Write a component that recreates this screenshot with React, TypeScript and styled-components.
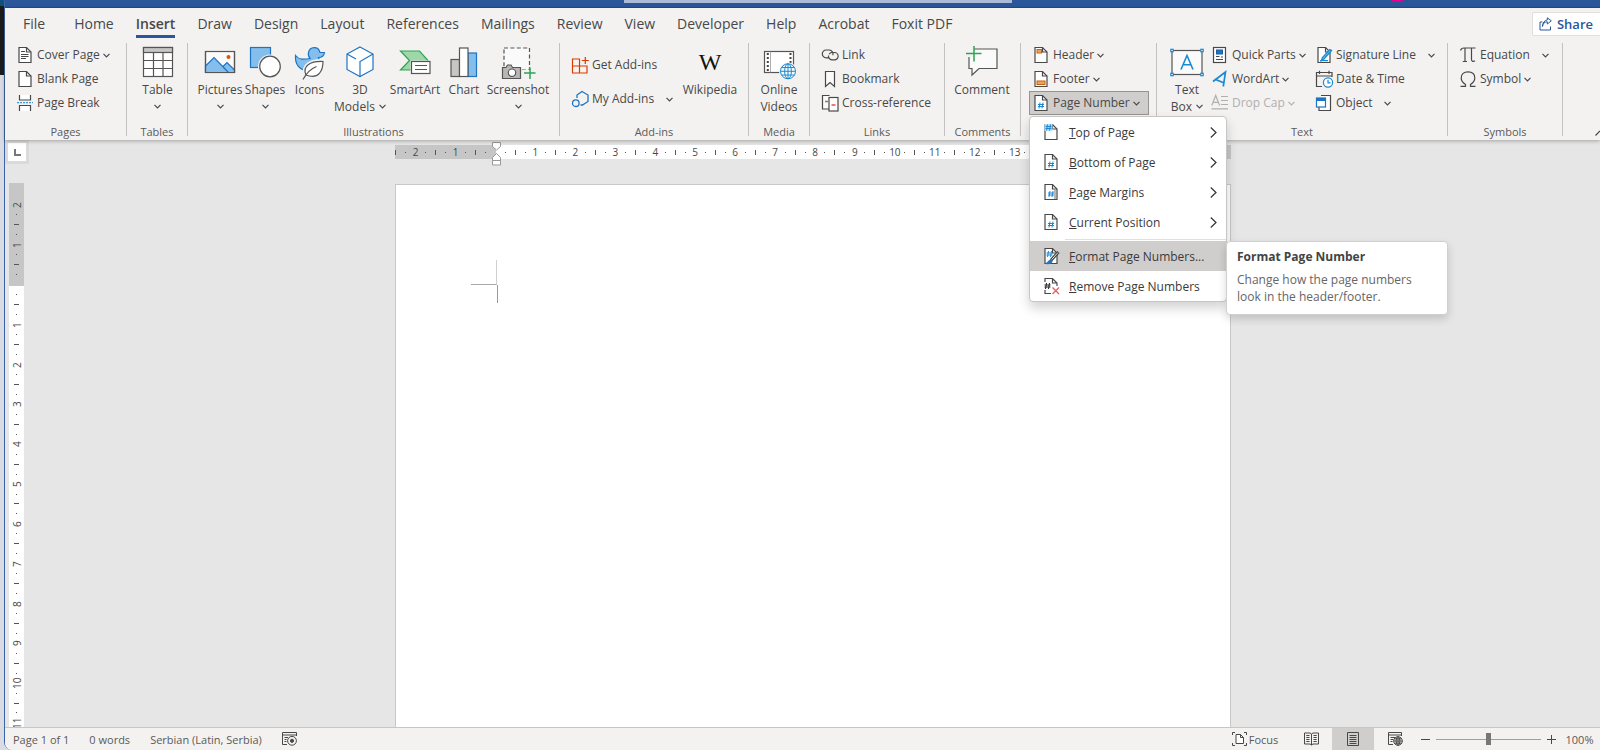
import React from "react";
import styled, { createGlobalStyle, css } from "styled-components";

const ink = "#484848";
const blue = "#1e74c4";
const sky = "#83beec";

const GlobalStyle = createGlobalStyle`
  * { box-sizing: border-box; }
  body { margin: 0; overflow: hidden; }
  body, button, input { font-family: "Open Sans", "Noto Sans", sans-serif; color: ${ink}; }
  button { border: 0; padding: 0; background: none; text-align: left; }
  svg { display: block; flex: none; overflow: visible; }
`;

/* ---------- frame ---------- */

const Desktop = styled.div`
  display: flex;
  height: 100vh;
  background: linear-gradient(#10507c 0 6px, #1b1b1b 6px 75px, #d9dce2 75px);
`;

const AppWindow = styled.div`
  display: flex;
  flex-direction: column;
  flex: 1;
  min-width: 0;
  margin-left: 4px;
  border-left: 1px solid #3c63a9;
  border-bottom-left-radius: 8px;
  background: #e6e6e6;
`;

const TitleBar = styled.header`
  display: flex;
  justify-content: center;
  height: 8px;
  flex: none;
  background: #2b579a;
  border-bottom: 1px solid #1c4d93;
`;

const SearchInput = styled.input`
  width: 388px;
  height: 3px;
  margin: 0 auto 0 619px;
  padding: 0;
  border: 0;
  background: #a9bbd6;
`;

const Avatar = styled.span`
  width: 12px;
  height: 2px;
  margin-right: 197px;
  border-radius: 0 0 6px 6px;
  background: #e3008c;
`;

const Ribbon = styled.div`
  position: relative;
  z-index: 2;
  flex: none;
  background: #f3f2f1;
  padding-bottom: 4px;
  box-shadow: 0 1px 4px rgba(0, 0, 0, 0.3);
`;

const TabRow = styled.nav`
  display: flex;
  align-items: flex-start;
  justify-content: space-between;
  height: 35px;
`;

const TabList = styled.div`
  display: flex;
  gap: 22px;
  padding: 7px 0 0 18px;
`;

const Tab = styled.button<{ $active?: boolean; $first?: boolean }>`
  font-size: 14px;
  line-height: 18px;
  padding-bottom: 2px;
  margin-right: ${(p) => (p.$first ? "7px" : "0")};
  border-bottom: 3px solid ${(p) => (p.$active ? "#2b579a" : "transparent")};
  font-weight: ${(p) => (p.$active ? 600 : 400)};
`;

const ShareButton = styled.button`
  display: flex;
  align-items: center;
  gap: 5px;
  height: 24px;
  margin-top: 4px;
  padding: 0 7px 0 6px;
  background: #ffffff;
  border: 1px solid #e1dfdd;
  border-right: 0;
  border-radius: 2px 0 0 2px;
  font-size: 13px;
  font-weight: 600;
  color: #2b579a;
`;

/* ---------- ribbon groups ---------- */

const GroupRow = styled.div`
  display: flex;
`;

const GroupBox = styled.section<{ $width: number }>`
  display: flex;
  flex-direction: column;
  justify-content: space-between;
  flex: 0 0 ${(p) => p.$width}px;
  height: 93px;
  border-right: 1px solid #c4c2c0;
`;

const GroupBody = styled.div<{ $pad: number }>`
  display: flex;
  padding-left: ${(p) => p.$pad}px;
`;

const GroupLabel = styled.h2`
  margin: 0 0 -2px;
  font-size: 11px;
  font-weight: 400;
  line-height: 12px;
  text-align: center;
  color: #5a5a5a;
`;

const Stack = styled.div<{ $width?: number; $spread?: boolean }>`
  display: flex;
  flex-direction: column;
  width: ${(p) => (p.$width ? p.$width + "px" : "auto")};
  ${(p) =>
    p.$spread &&
    css`
      gap: 10px;
      padding-top: 10px;
    `}
`;

const SmallButton = styled.button<{ $split?: boolean; $pressed?: boolean }>`
  display: flex;
  align-items: center;
  height: 24px;
  padding-right: 8px;
  font-size: 12px;
  line-height: 16px;
  white-space: nowrap;
  ${(p) =>
    p.$pressed &&
    css`
      padding-left: 2px;
      margin-left: -3px;
      background: #d0cecd;
      border: 1px solid #969492;
    `}
  &:disabled { color: #b1afad; }
  > svg { margin-right: 3px; }
  > span + svg { margin: 0 0 0 ${(p) => (p.$split ? "12px" : "3px")}; }
`;

const LargeButton = styled.button<{ $width: number }>`
  display: flex;
  flex-direction: column;
  align-items: center;
  width: ${(p) => p.$width}px;
  padding-top: 3px;
  font-size: 12px;
  line-height: 17px;
  white-space: nowrap;
  > svg { margin-bottom: 3px; }
  > svg + span + svg { margin: 6px 0 0; }
`;

const SecondLine = styled.span`
  display: flex;
  align-items: center;
  gap: 4px;
`;

const WikiGlyph = styled.span`
  height: 32px;
  margin-bottom: 3px;
  font-family: "Liberation Serif", serif;
  font-size: 24px;
  line-height: 32px;
  color: #111111;
`;

const CollapseButton = styled.button`
  align-self: flex-end;
  margin-left: auto;
`;

/* ---------- menu ---------- */

const MenuAnchor = styled.div`
  position: relative;
`;

const Menu = styled.div`
  position: absolute;
  z-index: 5;
  top: 25px;
  left: -3px;
  width: 198px;
  background: #ffffff;
  border: 1px solid #c8c6c4;
  border-radius: 4px;
  box-shadow: 0 6px 12px rgba(0, 0, 0, 0.18);
`;

const MenuItem = styled.button<{ $active?: boolean }>`
  display: flex;
  align-items: center;
  gap: 9px;
  width: 100%;
  height: 30px;
  padding: 0 9px 0 12px;
  font-size: 12px;
  white-space: nowrap;
  color: #3a3a3a;
  background: ${(p) => (p.$active ? "#d0cecd" : "transparent")};
  > span { flex: 1; }
`;

const MenuRule = styled.hr`
  height: 1px;
  margin: 2px 0 1px 35px;
  border: 0;
  background: #e1dfdd;
`;

const Tooltip = styled.div`
  position: absolute;
  top: 124px;
  left: 196px;
  width: 222px;
  padding: 6px 10px 9px;
  background: #ffffff;
  border: 1px solid #d2d0ce;
  border-radius: 4px;
  box-shadow: 0 4px 8px rgba(0, 0, 0, 0.16);
  font-size: 12px;
  line-height: 17px;
  color: #666666;
  h3 {
    margin: 0 0 6px;
    font-size: 12px;
    font-weight: 700;
    color: #444444;
  }
  p { margin: 0; }
`;

/* ---------- document area ---------- */

const Workspace = styled.main`
  display: flex;
  flex: 1;
  min-height: 0;
  overflow: hidden;
`;

const Gutter = styled.div`
  display: flex;
  flex-direction: column;
  width: 24px;
  flex: none;
`;

const TabStop = styled.button`
  display: flex;
  align-items: center;
  justify-content: center;
  flex: none;
  width: 24px;
  height: 24px;
  margin-bottom: 19px;
  background: #ffffff;
  border: 3px solid #dadada;
`;

const VRuler = styled.div`
  margin-left: 4px;
  width: 15px;
  flex: none;
  display: flex;
  flex-direction: column;
`;

const VMargin = styled.div`
  height: 103px;
  flex: none;
  display: grid;
  grid-template-rows: repeat(8, 1fr);
  padding: 17px 0 7px;
  background: #c6c6c6;
`;

const VScale = styled.div`
  display: grid;
  grid-template-rows: repeat(84, 1fr);
  height: 840px;
  padding-top: 4px;
  background: #ffffff;
`;

const HRuler = styled.div`
  display: flex;
  width: 836px;
  height: 14px;
  margin-top: 5px;
`;

const HMargin = styled.div`
  position: relative;
  display: grid;
  grid-template-columns: repeat(10, 10px);
  justify-content: end;
  flex: 0 0 101px;
  width: 101px;
  min-width: 0;
  padding-right: 5px;
  background: #c6c6c6;
`;

const HScale = styled.div`
  display: grid;
  grid-template-columns: repeat(63, 1fr);
  flex: 1;
  padding-left: 5px;
  background: #ffffff;
`;

const Mark = styled.span<{ $vertical?: boolean }>`
  display: flex;
  align-items: center;
  justify-content: center;
  min-width: 0;
  min-height: 0;
  font-size: 10px;
  line-height: 14px;
  white-space: nowrap;
  ${(p) =>
    p.$vertical &&
    css`
      writing-mode: vertical-rl;
      transform: rotate(180deg);
    `}
`;

const Tick = styled.i<{ $half?: boolean; $vertical?: boolean }>`
  width: ${(p) => (p.$half && p.$vertical ? "5px" : "1px")};
  height: ${(p) => (p.$half && !p.$vertical ? "5px" : "1px")};
  background: #555555;
`;

const IndentHandle = styled.span`
  position: absolute;
  right: -5px;
  top: -3px;
`;

const Canvas = styled.div`
  display: flex;
  flex-direction: column;
  align-items: center;
  flex: 1;
  padding-right: 4px;
`;

const Paper = styled.article`
  flex: 1;
  width: 836px;
  margin-top: 25px;
  padding: 75px 0 0 75px;
  background: #ffffff;
  border: 1px solid #c8c8c8;
  border-bottom: 0;
`;

const CropMark = styled.div`
  width: 26px;
  height: 25px;
  border-right: 1px solid #d0d0d0;
  border-bottom: 1px solid #a8a8a8;
`;

const Caret = styled.div`
  width: 1px;
  height: 18px;
  margin-left: 26px;
  background: #999999;
`;

/* ---------- status bar ---------- */

const StatusBar = styled.footer`
  display: flex;
  align-items: stretch;
  justify-content: space-between;
  flex: none;
  height: 23px;
  padding-left: 8px;
  border-top: 1px solid #c8c6c4;
  border-bottom-left-radius: 7px;
  background: #f3f2f1;
`;

const StatusSide = styled.div<{ $gap?: number }>`
  display: flex;
  align-items: stretch;
  gap: ${(p) => p.$gap ?? 0}px;
`;

const StatusButton = styled.button<{ $width?: number; $active?: boolean }>`
  display: flex;
  align-items: center;
  justify-content: center;
  gap: 2px;
  width: ${(p) => (p.$width ? p.$width + "px" : "auto")};
  font-size: 11px;
  color: #5a5a5a;
  background: ${(p) => (p.$active ? "#d0cecd" : "transparent")};
`;

const Zoom = styled.input`
  appearance: none;
  width: 105px;
  margin: 0 2px;
  background: transparent;
  &::-webkit-slider-runnable-track {
    height: 12px;
    background: linear-gradient(#a19f9d, #a19f9d) center / 100% 1px no-repeat;
  }
  &::-webkit-slider-thumb {
    appearance: none;
    width: 5px;
    height: 12px;
    background: #777777;
  }
`;

/* ---------- icons ---------- */

const Chevron = ({ color = ink }: { color?: string }) => (
  <svg width="7" height="5" viewBox="0 0 7 5" fill="none" stroke={color} strokeWidth="1.2">
    <path d="M.5.8 3.5 3.8 6.5.8" />
  </svg>
);

const ChevronRight = () => (
  <svg width="7" height="11" viewBox="0 0 7 11" fill="none" stroke="#333" strokeWidth="1.2">
    <path d="M.8.5 6 5.5.8 10.5" />
  </svg>
);

const Small = ({ children }: { children: React.ReactNode }) => (
  <svg width="18" height="18" viewBox="0 0 18 18" fill="none" stroke={ink} strokeWidth="1.2">
    {children}
  </svg>
);

const Large = ({ children }: { children: React.ReactNode }) => (
  <svg width="32" height="32" viewBox="0 0 32 32" fill="none" stroke="#555" strokeWidth="1.2">
    {children}
  </svg>
);

const PageShape = () => (
  <>
    <path d="M3 1.5H10.5L15 6V16.5H3Z" fill="#fff" />
    <path d="M10.5 1.5V6H15" />
  </>
);

const Hash = ({ x, y, color = "#1c8ad0" }: { x: number; y: number; color?: string }) => (
  <path
    d={`M${x + 2} ${y}L${x + 1} ${y + 6}M${x + 5} ${y}L${x + 4} ${y + 6}M${x} ${y + 2}H${x + 6}M${x} ${y + 4}H${x + 6}`}
    stroke={color}
    strokeWidth="1"
  />
);

const Globe = ({ x, y, r, color }: { x: number; y: number; r: number; color: string }) => (
  <g stroke={color} strokeWidth="1">
    <circle cx={x} cy={y} r={r} fill="#f8fbfe" />
    <ellipse cx={x} cy={y} rx={r * 0.45} ry={r} />
    <path d={`M${x - r} ${y}H${x + r}M${x} ${y - r}V${y + r}M${x - r * 0.87} ${y - r / 2}H${x + r * 0.87}M${x - r * 0.87} ${y + r / 2}H${x + r * 0.87}`} />
  </g>
);

const CoverPageIcon = () => (
  <Small><PageShape /><path d="M5 5.5H9M5 8.5H12.5M5 10.5H12.5M5 12.5H10" strokeWidth="1" /></Small>
);
const BlankPageIcon = () => <Small><PageShape /></Small>;
const PageBreakIcon = () => (
  <Small>
    <path d="M3.5 1V6H14.5V1M3.5 17V11.5H14.5V17" fill="#fff" />
    <path d="M1 8.7H17" stroke="#3a96dd" strokeDasharray="2 1" />
  </Small>
);
const TableIcon = () => (
  <Large>
    <rect x="1.5" y="1.5" width="29" height="29" fill="#fff" />
    <rect x="1.5" y="1.5" width="29" height="5" fill="#c8c6c4" />
    <path d="M1.5 14.5H30.5M1.5 22.5H30.5M11.5 6.5V30.5M21 6.5V30.5" />
  </Large>
);
const PicturesIcon = () => (
  <Large>
    <rect x="1.5" y="5.5" width="29" height="21" fill="#fafafa" />
    <path d="M18.5 21 23 16.5 30.5 24V26.5H23Z" fill={sky} stroke={blue} />
    <path d="M1.5 26.5V20L10 11.5 24.5 26.5Z" fill={sky} stroke={blue} />
    <path d="M1.5 26.5V5.5H30.5V26.5Z" />
    <circle cx="24.5" cy="11" r="2" fill="#e35205" stroke="none" />
  </Large>
);
const ShapesIcon = () => (
  <Large>
    <rect x="1.5" y="1.5" width="20" height="20" fill={sky} stroke={blue} />
    <circle cx="21" cy="20.5" r="12" fill="#f3f2f1" stroke="none" />
    <circle cx="21" cy="20.5" r="10.3" fill="#fff" />
  </Large>
);
const IconsIcon = () => (
  <Large>
    <path d="M1.5 9.5C5 14 10 13.5 16 12.5 13 9 14 2 20 1.7 24 1.5 25.5 4.5 26 6.5H30.5C30 10 28 11.5 24.5 11.5 28 19 22 24.5 14 24.5 5 24.5 1 18 1.5 9.5Z" fill={sky} stroke={blue} />
    <path d="M12 29C8 20 16 14 30 15 30 24 26 34 12 29Z" fill="#fff" stroke="#f3f2f1" strokeWidth="4" />
    <path d="M12 29C8 20 16 15 29 15.5 29 24 25 34 12 29Z" fill="#fff" />
    <path d="M9 33.5C12 28 16 23 22.5 20.5" />
  </Large>
);
const CubeIcon = () => (
  <Large>
    <g stroke={blue}>
      <path d="M16 1 29 8V23.5L16 30.5 3 23.5V8Z" fill="#fff" />
      <path d="M3 8 12 13M29 8 16 15.5V30.5" />
    </g>
  </Large>
);
const SmartArtIcon = () => (
  <Large>
    <path d="M1.5 5H20.5L29 14.5 20.5 24H1.5L10.5 14.5Z" fill="#9fd8a8" stroke="#2ea352" />
    <rect x="11.5" y="14.5" width="20.5" height="14" fill="#f3f2f1" stroke="none" />
    <rect x="12.5" y="15.5" width="18.5" height="12" fill="#fff" />
    <path d="M16 19.5H28M16 23.5H28" strokeWidth="1" />
  </Large>
);
const ChartIcon = () => (
  <Large>
    <rect x="3" y="13.5" width="8.5" height="17" fill="#c8c6c4" />
    <rect x="20" y="7" width="8.5" height="23.5" fill={sky} stroke={blue} />
    <rect x="11.5" y="2" width="8.5" height="28.5" fill="#fff" />
  </Large>
);
const ScreenshotIcon = () => (
  <Large>
    <rect x="2" y="2" width="25.5" height="22" fill="#fafafa" strokeDasharray="4 2.4" />
    <path d="M19 24H34V34H19Z" fill="#f3f2f1" stroke="none" />
    <path d="M.5 21.5H4L5.5 19H9L10.5 21.5H18.5V32.5H.5Z" fill="#b9b7b5" />
    <circle cx="10" cy="26.7" r="3.7" fill="#fff" />
    <path d="M28 21.5V33M22 27H33.5" stroke="#2ea352" strokeWidth="1.5" />
  </Large>
);
const GetAddinsIcon = () => (
  <Small>
    <path d="M1.5 3H8.5V17H1.5ZM1.5 10H16V17H8.5" stroke="#d83b01" fill="#fbf3f0" />
    <path d="M14.3 1V8M10.8 4.5H17.8" stroke="#d83b01" />
  </Small>
);
const MyAddinsIcon = () => (
  <Small>
    <g stroke={blue} strokeWidth="1.3">
      <path d="M6 8V5L11 1.5 17 5V11.5L11.5 15H9.5" />
      <circle cx="4.8" cy="13.2" r="3.3" />
    </g>
  </Small>
);
const OnlineVideosIcon = () => (
  <Large>
    <rect x="1.5" y="5.5" width="29" height="21" fill="#fff" />
    <path d="M4.8 7V26M27.5 7V17" stroke="#444" strokeWidth="2" strokeDasharray="2 2" />
    <path d="M7.5 5.5V26.5" stroke="#999" strokeWidth=".8" />
    <circle cx="25" cy="25.3" r="9" fill="#f3f2f1" stroke="none" />
    <Globe x={25} y={25.3} r={7.5} color="#1c8ad0" />
  </Large>
);
const LinkIcon = () => (
  <Small>
    <path d="M8.5 11.8H5.2A3.9 3.9 0 0 1 5.2 4H8.3A3.9 3.9 0 0 1 11.8 9.2M8.2 8.2A3.5 3.5 0 0 1 10.8 6.5H13.5A3.6 3.6 0 0 1 13.5 13.8H10.8A3.6 3.6 0 0 1 7.5 9.5" />
  </Small>
);
const BookmarkIcon = () => <Small><path d="M4.5 1.5H13.5V16.5L9 12.5 4.5 16.5Z" fill="#fafafa" /></Small>;
const CrossRefIcon = () => (
  <Small>
    <path d="M8 15H1.5V1.5H8.5" fill="#fafafa" />
    <rect x="8" y="3.5" width="9" height="13.5" fill="#fff" />
    <path d="M4 7.5H7M10.5 11H14.5" stroke="#e8504a" strokeWidth="1.5" />
  </Small>
);
const CommentIcon = () => (
  <Large>
    <path d="M3 3H31V22.5H13L6 29V22.5H3Z" fill="#fafafa" />
    <path d="M-1 -1H8V11H-1Z" fill="#f3f2f1" stroke="none" />
    <path d="M8 0V15.5M0 7.5H15.5" stroke="#2ea352" strokeWidth="1.5" />
  </Large>
);
const HeaderIcon = () => (
  <Small><PageShape /><rect x="5" y="3.5" width="4.5" height="3.5" fill="#f0a35e" stroke="#c8620f" strokeWidth="1" /></Small>
);
const FooterIcon = () => (
  <Small><PageShape /><rect x="5" y="11" width="8" height="3.5" fill="#f0a35e" stroke="#c8620f" strokeWidth="1" /></Small>
);
const PageNumberIcon = () => <Small><PageShape /><Hash x={6} y={8.5} /></Small>;
const TopPageIcon = () => (
  <Small><PageShape /><rect x="2.5" y="1" width="8" height="7" fill="#b5d8f3" stroke="none" /><Hash x={3.5} y={1.5} /></Small>
);
const MarginsIcon = () => <Small><PageShape /><path d="M13 7V16" stroke="#888" /><Hash x={6} y={8} /></Small>;
const FormatIcon = () => (
  <Small>
    <PageShape />
    <Hash x={4.5} y={4} />
    <path d="M16.5 5 9 13.2" stroke="#444" strokeWidth="3" />
    <path d="M16 5.5 9.5 12.7" stroke="#ddd" strokeWidth="1" />
    <path d="M4 16.5C7 16 6 13.5 9 12.8L10 14C9.5 16.5 7 17 4 16.5Z" fill={blue} stroke={blue} />
  </Small>
);
const RemoveIcon = () => (
  <Small>
    <path d="M3 5V1.5H10.5L15 6V9M10.5 1.5V6H15M3 13V16.5H9" />
    <Hash x={2.5} y={6} color="#222" />
    <path d="M10.5 10.5 17 17M17 10.5 10.5 17" stroke="#e06060" strokeWidth="1.3" />
  </Small>
);
const TextBoxIcon = () => (
  <Large>
    <rect x="1" y="4.5" width="30" height="24" fill="#fafafa" />
    <g fill="#fff" stroke="#1c8ad0">
      <rect x="-.2" y="3.3" width="2.4" height="2.4" />
      <rect x="29.8" y="3.3" width="2.4" height="2.4" />
      <rect x="-.2" y="27.3" width="2.4" height="2.4" />
      <rect x="29.8" y="27.3" width="2.4" height="2.4" />
    </g>
    <path d="M10 23.5 16 9.5 22 23.5M12 18.8H20" stroke="#1c8ad0" strokeWidth="1.6" />
  </Large>
);
const QuickPartsIcon = () => (
  <Small>
    <rect x="2.5" y="1.5" width="12" height="15" fill="#fff" />
    <rect x="5.5" y="4" width="6" height="4" fill={blue} stroke="#175ea3" strokeWidth="1" />
    <path d="M5 10.5H8.5M5 13.5H12M10 11H12" strokeWidth="1" />
  </Small>
);
const WordArtIcon = () => (
  <Small><path d="M2 11.5 14.5 2 12.3 16.5M2 11.5 4.5 9.5 12.6 12.8" stroke="#1c8ad0" strokeWidth="1.7" /></Small>
);
const DropCapIcon = () => (
  <Small>
    <path d="M.8 11.5 4.7 1.5 8.6 11.5M2.2 8.3H7.2M10 2.5H17M10 6.5H17M10 10.5H17M.5 14.8H17" stroke="#b1afad" />
  </Small>
);
const SignatureIcon = () => (
  <Small>
    <PageShape />
    <path d="M16.5 4.5 9 13 6.5 14.5 7.3 11.8 14.8 3.5Z" fill={sky} stroke="#1c8ad0" strokeWidth="1.3" />
    <path d="M5 14.6H13" stroke="#1c8ad0" />
  </Small>
);
const DateIcon = () => (
  <Small>
    <path d="M7 16.5H1.5V2.5H17V7M1.5 6H17M4.5.8V4M14 .8V4" />
    <circle cx="13" cy="12.5" r="4.6" fill="#fff" stroke="#1c8ad0" />
    <path d="M13 9.8V12.8H15.5" stroke="#1c8ad0" />
  </Small>
);
const ObjectIcon = () => (
  <Small>
    <path d="M6 1.5H15.5V16.5H4V13" fill="#fff" />
    <rect x="1.5" y="4" width="9" height="9" fill="#fff" stroke={blue} />
    <path d="M1.5 5.5H10.5" stroke={blue} strokeWidth="3" />
  </Small>
);
const PiIcon = () => (
  <Small>
    <path d="M1.5 4.5C2 2.5 3 2 5 2H16.5M6 2V15.5M3.8 15.5H8M12.5 2V13.5C12.5 15.5 14.5 16 16 14.8" />
  </Small>
);
const OmegaIcon = () => (
  <Small>
    <path d="M1.5 16.3H6.5V14.5C3.5 12.5 2.2 10.5 2.2 8 2.2 4 5 1.8 9 1.8S15.8 4 15.8 8C15.8 10.5 14.5 12.5 11.5 14.5V16.3H16.5" />
  </Small>
);
const ShareIcon = () => (
  <svg width="13" height="14" viewBox="0 0 13 14" fill="none" stroke="#2b579a" strokeWidth="1">
    <path d="M3.5 5H1V13H11.5V9.5" />
    <path d="M3.5 9.5C3.8 6.5 5.5 4.8 8.3 4.8V7L12.3 3.8 8.3.8V3C5.5 3.2 3.5 6 3.5 9.5Z" />
  </svg>
);
const RecordIcon = () => (
  <svg width="16" height="14" viewBox="0 0 16 14" fill="none" stroke={ink}>
    <path d="M5 12.5H.5V.5H14.5V4M.5 3H14.5M2.5 5.5H6M2.5 7.5H4.5M2.5 9.5H4.5" />
    <circle cx="10" cy="8.8" r="4.4" />
    <circle cx="10" cy="8.8" r="1.6" fill={ink} />
  </svg>
);
const FocusIcon = () => (
  <svg width="15" height="14" viewBox="0 0 15 14" fill="none" stroke={ink}>
    <path d="M3 .5H.5V3M.5 11V13.5H3M12 .5H14.5V3M14.5 11V13.5H12" />
    <path d="M4 2.5H8.5L11.5 5.5V11.5H4ZM8.5 2.5V5.5H11.5" fill="#fff" />
  </svg>
);
const ReadIcon = () => (
  <svg width="15" height="14" viewBox="0 0 15 14" fill="none" stroke={ink}>
    <path d="M.5 1H6L7.5 2 9 1H14.5V12H9L7.5 13 6 12H.5ZM7.5 2V13M2.3 3.5H5.5M2.3 5.5H5.5M2.3 7.5H5.5M2.3 9.5H5.5M9.5 3.5H12.7M9.5 5.5H12.7M9.5 7.5H12.7M9.5 9.5H12.7" />
  </svg>
);
const PrintIcon = () => (
  <svg width="12" height="14" viewBox="0 0 12 14" fill="none" stroke={ink}>
    <path d="M.5.5H11.5V13.5H.5ZM2.5 3.5H9.5M2.5 5.5H9.5M2.5 7.5H9.5M2.5 9.5H9.5M2.5 11.5H9.5" />
  </svg>
);
const WebIcon = () => (
  <svg width="15" height="14" viewBox="0 0 15 14" fill="none" stroke={ink}>
    <path d="M5 12.5H.5V.5H13.5V4M.5 3H13.5M2.5 5.5H7M2.5 7.5H5.5M2.5 9.5H4.5" />
    <Globe x={10} y={9} r={4.3} color={ink} />
  </svg>
);

/* ---------- pieces ---------- */

interface CommandProps {
  icon: React.ReactNode;
  label: string;
  menu?: boolean;
  split?: boolean;
  pressed?: boolean;
  disabled?: boolean;
}

const Command = ({ icon, label, menu, split, pressed, disabled }: CommandProps) => (
  <SmallButton $split={split} $pressed={pressed} disabled={disabled}>
    {icon}
    <span>{label}</span>
    {(menu || split) && <Chevron color={disabled ? "#b1afad" : ink} />}
  </SmallButton>
);

interface BigCommandProps {
  icon: React.ReactNode;
  width: number;
  label: string;
  second?: string;
  menu?: boolean;
}

const BigCommand = ({ icon, width, label, second, menu }: BigCommandProps) => (
  <LargeButton $width={width}>
    {icon}
    <span>{label}</span>
    {second && (
      <SecondLine>
        {second}
        {menu && <Chevron />}
      </SecondLine>
    )}
    {!second && menu && <Chevron />}
  </LargeButton>
);

interface GroupProps {
  label: string;
  width: number;
  pad?: number;
  hideLabel?: boolean;
  children: React.ReactNode;
}

const Group = ({ label, width, pad = 0, hideLabel, children }: GroupProps) => (
  <GroupBox $width={width} aria-label={label}>
    <GroupBody $pad={pad}>{children}</GroupBody>
    {!hideLabel && <GroupLabel>{label}</GroupLabel>}
  </GroupBox>
);

const quarterMark = (quarter: number, vertical?: boolean) => {
  const q = Math.abs(quarter);
  return (
    <Mark key={quarter} $vertical={vertical && q % 4 === 0}>
      {q % 4 === 0 ? q / 4 : <Tick $half={q % 2 === 0} $vertical={vertical} />}
    </Mark>
  );
};

const range = (from: number, to: number) => Array.from({ length: to - from + 1 }, (_, i) => from + i);

const tabs = ["File", "Home", "Insert", "Draw", "Design", "Layout", "References", "Mailings", "Review", "View", "Developer", "Help", "Acrobat", "Foxit PDF"];

const menuItems = [
  { label: "Top of Page", icon: <TopPageIcon />, sub: true },
  { label: "Bottom of Page", icon: <PageNumberIcon />, sub: true },
  { label: "Page Margins", icon: <MarginsIcon />, sub: true },
  { label: "Current Position", icon: <PageNumberIcon />, sub: true },
  { label: "Format Page Numbers...", icon: <FormatIcon />, active: true },
  { label: "Remove Page Numbers", icon: <RemoveIcon /> },
];

const PageNumberMenu = () => (
  <Menu role="menu">
    {menuItems.map((item) => (
      <React.Fragment key={item.label}>
        {item.active && <MenuRule />}
        <MenuItem role="menuitem" $active={item.active}>
          {item.icon}
          <span>
            <u>{item.label[0]}</u>
            {item.label.slice(1)}
          </span>
          {item.sub && <ChevronRight />}
        </MenuItem>
      </React.Fragment>
    ))}
    <Tooltip role="tooltip">
      <h3>Format Page Number</h3>
      <p>
        Change how the page numbers
        <br />
        look in the header/footer.
      </p>
    </Tooltip>
  </Menu>
);

export default function App() {
  return (
    <Desktop>
      <GlobalStyle />
      <AppWindow>
        <TitleBar>
          <SearchInput aria-label="Search" />
          <Avatar />
        </TitleBar>

        <Ribbon>
          <TabRow>
            <TabList role="tablist">
              {tabs.map((tab) => (
                <Tab key={tab} role="tab" $active={tab === "Insert"} $first={tab === "File"}>
                  {tab}
                </Tab>
              ))}
            </TabList>
            <ShareButton>
              <ShareIcon />
              Share
            </ShareButton>
          </TabRow>

          <GroupRow>
            <Group label="Pages" width={122} pad={11}>
              <Stack>
                <Command icon={<CoverPageIcon />} label="Cover Page" menu />
                <Command icon={<BlankPageIcon />} label="Blank Page" />
                <Command icon={<PageBreakIcon />} label="Page Break" />
              </Stack>
            </Group>
            <Group label="Tables" width={61} pad={8}>
              <BigCommand icon={<TableIcon />} width={45} label="Table" menu />
            </Group>
            <Group label="Illustrations" width={372} pad={9}>
              <BigCommand icon={<PicturesIcon />} width={46} label="Pictures" menu />
              <BigCommand icon={<ShapesIcon />} width={44} label="Shapes" menu />
              <BigCommand icon={<IconsIcon />} width={45} label="Icons" />
              <BigCommand icon={<CubeIcon />} width={56} label="3D" second="Models" menu />
              <BigCommand icon={<SmartArtIcon />} width={54} label="SmartArt" />
              <BigCommand icon={<ChartIcon />} width={44} label="Chart" />
              <BigCommand icon={<ScreenshotIcon />} width={64} label="Screenshot" menu />
            </Group>
            <Group label="Add-ins" width={189} pad={11}>
              <Stack $width={108} $spread>
                <Command icon={<GetAddinsIcon />} label="Get Add-ins" />
                <Command icon={<MyAddinsIcon />} label="My Add-ins" split />
              </Stack>
              <LargeButton $width={62}>
                <WikiGlyph aria-hidden>W</WikiGlyph>
                <span>Wikipedia</span>
              </LargeButton>
            </Group>
            <Group label="Media" width={61} pad={7}>
              <BigCommand icon={<OnlineVideosIcon />} width={46} label="Online" second="Videos" />
            </Group>
            <Group label="Links" width={135} pad={11}>
              <Stack>
                <Command icon={<LinkIcon />} label="Link" />
                <Command icon={<BookmarkIcon />} label="Bookmark" />
                <Command icon={<CrossRefIcon />} label="Cross-reference" />
              </Stack>
            </Group>
            <Group label="Comments" width={76} pad={7}>
              <BigCommand icon={<CommentIcon />} width={60} label="Comment" />
            </Group>
            <Group label="Header and footer" width={136} pad={11} hideLabel>
              <Stack>
                <Command icon={<HeaderIcon />} label="Header" menu />
                <Command icon={<FooterIcon />} label="Footer" menu />
                <MenuAnchor>
                  <Command icon={<PageNumberIcon />} label="Page Number" menu pressed />
                  <PageNumberMenu />
                </MenuAnchor>
              </Stack>
            </Group>
            <Group label="Text" width={291} pad={6}>
              <BigCommand icon={<TextBoxIcon />} width={48} label="Text" second="Box" menu />
              <Stack $width={104}>
                <Command icon={<QuickPartsIcon />} label="Quick Parts" menu />
                <Command icon={<WordArtIcon />} label="WordArt" menu />
                <Command icon={<DropCapIcon />} label="Drop Cap" menu disabled />
              </Stack>
              <Stack>
                <Command icon={<SignatureIcon />} label="Signature Line" split />
                <Command icon={<DateIcon />} label="Date & Time" />
                <Command icon={<ObjectIcon />} label="Object" split />
              </Stack>
            </Group>
            <Group label="Symbols" width={115} pad={11}>
              <Stack>
                <Command icon={<PiIcon />} label="Equation" split />
                <Command icon={<OmegaIcon />} label="Symbol" menu />
              </Stack>
            </Group>
            <CollapseButton aria-label="Collapse the Ribbon">
              <svg width="5" height="6" viewBox="0 0 5 6" fill="none" stroke={ink} strokeWidth="1.2">
                <path d="M.5 5.5 5 1" />
              </svg>
            </CollapseButton>
          </GroupRow>
        </Ribbon>

        <Workspace>
          <Gutter>
            <TabStop aria-label="Left tab">
              <svg width="7" height="7" viewBox="0 0 7 7" fill="none" stroke="#777" strokeWidth="2">
                <path d="M1 0V6H7" />
              </svg>
            </TabStop>
            <VRuler>
              <VMargin>{range(-8, -1).map((q) => quarterMark(q, true))}</VMargin>
              <VScale>{range(1, 44).map((q) => quarterMark(q, true))}</VScale>
            </VRuler>
          </Gutter>
          <Canvas>
            <HRuler>
              <HMargin>
                {range(-10, -1).map((q) => quarterMark(q))}
                <IndentHandle>
                  <svg width="9" height="24" viewBox="0 0 9 24" fill="#fff" stroke="#999">
                    <path d="M.5.5H8.5V4.5L4.5 8 .5 4.5ZM.5 15.5 4.5 11.5 8.5 15.5V18.5H.5ZM.5 18.5H8.5V23H.5Z" />
                  </svg>
                </IndentHandle>
              </HMargin>
              <HScale>{range(1, 53).map((q) => quarterMark(q))}</HScale>
              <HMargin />
            </HRuler>
            <Paper>
              <CropMark />
              <Caret />
            </Paper>
          </Canvas>
        </Workspace>

        <StatusBar>
          <StatusSide $gap={20}>
            <StatusButton>Page 1 of 1</StatusButton>
            <StatusButton>0 words</StatusButton>
            <StatusButton>Serbian (Latin, Serbia)</StatusButton>
            <StatusButton aria-label="Record macro"><RecordIcon /></StatusButton>
          </StatusSide>
          <StatusSide>
            <StatusButton $width={70}><FocusIcon />Focus</StatusButton>
            <StatusButton $width={42} aria-label="Read Mode"><ReadIcon /></StatusButton>
            <StatusButton $width={42} $active aria-label="Print Layout"><PrintIcon /></StatusButton>
            <StatusButton $width={42} aria-label="Web Layout"><WebIcon /></StatusButton>
            <StatusButton $width={18} aria-label="Zoom out">
              <svg width="9" height="9" viewBox="0 0 9 9" stroke={ink}><path d="M0 4.5H9" /></svg>
            </StatusButton>
            <Zoom type="range" aria-label="Zoom" min={0} max={100} defaultValue={50} />
            <StatusButton $width={16} aria-label="Zoom in">
              <svg width="9" height="9" viewBox="0 0 9 9" stroke={ink}><path d="M0 4.5H9M4.5 0V9" /></svg>
            </StatusButton>
            <StatusButton $width={41}>100%</StatusButton>
          </StatusSide>
        </StatusBar>
      </AppWindow>
    </Desktop>
  );
}
